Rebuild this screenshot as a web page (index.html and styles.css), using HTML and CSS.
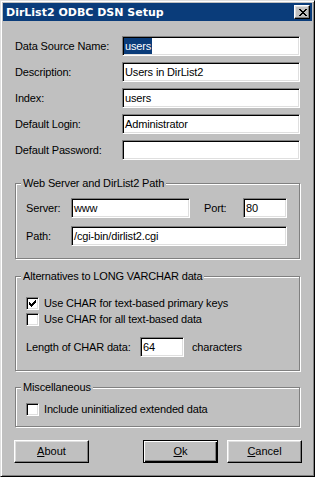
FILE: index.html
```html
<!DOCTYPE html>
<html lang="en">
<head>
    <meta charset="UTF-8">
    <title>DirList2 ODBC DSN Setup</title>
    <link rel="stylesheet" href="styles.css">
</head>
<body>
    <div class="window">
        <div class="titlebar">
            <span class="title">DirList2 ODBC DSN Setup</span>
            <button class="close" type="button">
                <svg width="8" height="7" viewBox="0 0 8 7" shape-rendering="crispEdges">
                    <path d="M0 0h2v1H0zM6 0h2v1H6zM1 1h2v1H1zM5 1h2v1H5zM2 2h4v1H2zM3 3h2v1H3zM2 4h4v1H2zM1 5h2v1H1zM5 5h2v1H5zM0 6h2v1H0zM6 6h2v1H6z" fill="#000"/>
                </svg>
            </button>
        </div>

        <div class="content">
            <div class="form">
                <span class="label">Data Source Name:</span>
                <div class="field"><span class="sel">users</span></div>
                <span class="label">Description:</span>
                <div class="field">Users in DirList2</div>
                <span class="label">Index:</span>
                <div class="field">users</div>
                <span class="label">Default Login:</span>
                <div class="field">Administrator</div>
                <span class="label">Default Password:</span>
                <div class="field"></div>
            </div>

            <fieldset class="group">
                <legend>Web Server and DirList2 Path</legend>
                <div class="group-body server-grid">
                    <span class="label">Server:</span>
                    <div class="field">www</div>
                    <span class="label port-label">Port:</span>
                    <div class="field">80</div>
                    <span class="label">Path:</span>
                    <div class="field path">/cgi-bin/dirlist2.cgi</div>
                </div>
            </fieldset>

            <fieldset class="group group-alt">
                <legend>Alternatives to LONG VARCHAR data</legend>
                <div class="group-body">
                    <div class="check-row">
                        <span class="checkbox checked">
                            <svg width="7" height="7" viewBox="0 0 7 7" shape-rendering="crispEdges">
                                <path d="M0 2h1v3H0zM1 3h1v3H1zM2 4h1v3H2zM3 3h1v3H3zM4 2h1v3H4zM5 1h1v3H5zM6 0h1v3H6z" fill="#000"/>
                            </svg>
                        </span>
                        <span>Use CHAR for text-based primary keys</span>
                    </div>
                    <div class="check-row">
                        <span class="checkbox"></span>
                        <span>Use CHAR for all text-based data</span>
                    </div>
                    <div class="length-row">
                        <span class="label length-label">Length of CHAR data:</span>
                        <div class="field length-field">64</div>
                        <span class="label units">characters</span>
                    </div>
                </div>
            </fieldset>

            <fieldset class="group group-misc">
                <legend>Miscellaneous</legend>
                <div class="group-body">
                    <div class="check-row">
                        <span class="checkbox"></span>
                        <span>Include uninitialized extended data</span>
                    </div>
                </div>
            </fieldset>

            <div class="buttons">
                <button class="btn" type="button"><u>A</u>bout</button>
                <button class="btn default ok" type="button"><u>O</u>k</button>
                <button class="btn" type="button"><u>C</u>ancel</button>
            </div>
        </div>
    </div>
</body>
</html>
```

FILE: styles.css
```css
* { margin: 0; padding: 0; box-sizing: border-box; }
body {
    font-family: 'Liberation Sans', Arial, sans-serif;
    font-size: 11px;
    line-height: 13px;
    letter-spacing: -0.15px;
    color: #000;
    background: #c0c0c0;
}
.window {
    width: 315px;
    height: 477px;
    background: #c0c0c0;
    border: 1px solid;
    border-color: #dfdfdf #000 #000 #dfdfdf;
    box-shadow: inset 1px 1px #fff, inset -1px -1px #808080;
    padding: 2px;
}
.titlebar {
    height: 18px;
    background: #0a3c7a;
    display: flex;
    align-items: center;
    justify-content: space-between;
    padding: 0 2px 0 3px;
}
.title {
    font-family: 'DejaVu Sans', Verdana, sans-serif;
    font-weight: bold;
    font-size: 11px;
    letter-spacing: 0;
    color: #fff;
}
.close {
    width: 16px;
    height: 14px;
    background: #c0c0c0;
    border: 1px solid;
    border-color: #fff #000 #000 #fff;
    box-shadow: inset -1px -1px #808080, inset 1px 1px #dfdfdf;
    display: flex;
    align-items: center;
    justify-content: center;
    padding: 0 0 0 1px;
}
.close svg { display: block; }
.content {
    padding: 15px 12px 0;
}
.form {
    display: grid;
    grid-template-columns: 107px 178px;
    grid-auto-rows: 20px;
    row-gap: 6px;
    align-items: center;
}
.label { white-space: nowrap; }
.field {
    height: 20px;
    background: #fff;
    border: 1px solid;
    border-color: #808080 #fff #fff #808080;
    box-shadow: inset 1px 1px #000, inset -1px -1px #dfdfdf;
    padding: 1px 2px;
    line-height: 16px;
    white-space: nowrap;
    overflow: hidden;
}
.sel {
    display: inline-block;
    background: #0a3c7a;
    color: #fff;
    margin-left: -1px;
    padding: 0 1px;
}

/* group boxes */
.group {
    margin-top: 17px;
    padding: 0;
    min-width: 0;
    border: 1px solid #808080;
    box-shadow: inset 1px 1px #fff, 1px 1px #fff;
}
.group legend {
    margin-left: 5px;
    padding: 0 2px;
    background: #c0c0c0;
    line-height: 13px;
}
.group-alt, .group-misc { margin-top: 11px; }
.group-misc { margin-top: 10px; }
.server-grid {
    display: grid;
    grid-template-columns: 45px 119px 1fr 44px;
    grid-auto-rows: 20px;
    row-gap: 8px;
    align-items: center;
    padding: 8px 12px 12px 10px;
}
.port-label { padding-left: 14px; }
.path { grid-column: 2 / 5; }
.group-alt .group-body { padding: 12px 10px 13px; }
.group-misc .group-body { padding: 7px 10px 9px; }
.check-row {
    display: flex;
    align-items: center;
    height: 16px;
    gap: 5px;
}
.checkbox {
    width: 13px;
    height: 13px;
    background: #fff;
    border: 1px solid;
    border-color: #808080 #fff #fff #808080;
    box-shadow: inset 1px 1px #000, inset -1px -1px #dfdfdf;
    display: flex;
    align-items: center;
    justify-content: center;
}
.checkbox svg { display: block; }
.length-row {
    display: flex;
    align-items: center;
    margin-top: 10px;
}
.length-label { width: 114px; }
.length-field { width: 44px; }
.units { margin-left: 8px; }

/* buttons */
.buttons {
    display: flex;
    gap: 9px;
    margin: 13px -2px 0 -1px;
}
.btn {
    width: 75px;
    height: 23px;
    background: #c0c0c0;
    font: inherit;
    color: #000;
    border: 1px solid;
    border-color: #fff #000 #000 #fff;
    box-shadow: inset -1px -1px #808080, inset 1px 1px #dfdfdf;
}
.btn u { text-decoration: underline; }
.ok { margin-left: auto; }
.btn.default {
    border-color: #000;
    box-shadow: inset 1px 1px #fff, inset -1px -1px #000, inset -2px -2px #808080;
}
```
